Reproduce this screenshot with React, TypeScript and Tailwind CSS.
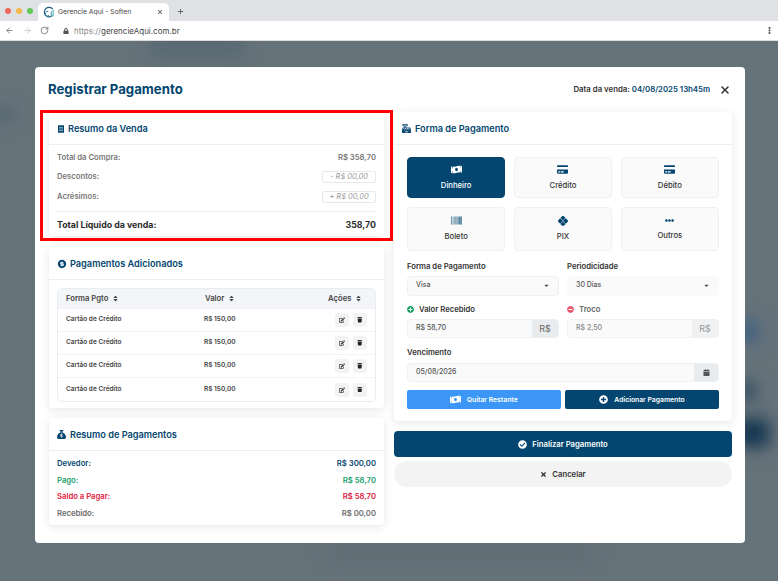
import { FaCalendar, FaCashRegister, FaCheckCircle, FaCreditCard, FaEdit, FaEllipsisH, FaEllipsisV, FaLock, FaMinusCircle, FaMoneyBillWave, FaPlusCircle, FaReceipt, FaSort, FaTimes, FaTrash, FaBarcode, FaCaretDown } from "react-icons/fa"
import { FaPix, FaSackDollar, FaXmark, FaPlus } from "react-icons/fa6"
import { RiMoneyDollarCircleFill } from "react-icons/ri"
import { ArrowLeft, ArrowRight, RotateCw } from "lucide-react"
import type { ReactNode } from "react"

const methods = [
  { label: "Dinheiro", icon: <FaMoneyBillWave className="text-[11px]" />, active: true },
  { label: "Crédito", icon: <FaCreditCard className="text-[11px]" /> },
  { label: "Débito", icon: <FaCreditCard className="text-[11px]" /> },
  { label: "Boleto", icon: <FaBarcode className="text-[11px]" /> },
  { label: "PIX", icon: <FaPix className="text-[10px]" /> },
  { label: "Outros", icon: <FaEllipsisH className="text-[9px]" /> },
]

const summary = [
  { label: "Devedor:", value: "R$ 300,00", color: "text-[#04466f]" },
  { label: "Pago:", value: "R$ 58,70", color: "text-[#16a06a]" },
  { label: "Saldo a Pagar:", value: "R$ 58,70", color: "text-[#e0173d]" },
  { label: "Recebido:", value: "R$ 00,00", color: "text-[#6b6b6b]" },
]

function Card({ className, children }: { className: string; children: ReactNode }) {
  return <div className={`rounded-[4px] bg-white shadow-[0_2px_10px_rgba(0,0,0,0.1)] ${className}`}>{children}</div>
}

function CardTitle({ icon, title, gap }: { icon: ReactNode; title: string; gap: string }) {
  return (
    <div className={`flex h-[33px] items-center border-b border-[#edf0f3] pl-[8px] pt-px text-[9.2px] font-semibold text-[#04466f] ${gap}`}>
      {icon}
      <span>{title}</span>
    </div>
  )
}

function Label({ children, muted }: { children: ReactNode; muted?: boolean }) {
  return <div className={`text-[7.7px] font-semibold ${muted ? "text-[#666]" : "text-[#333]"}`}>{children}</div>
}

function Chrome() {
  return (
    <div className="shrink-0">
      <div className="flex h-[21px] items-end bg-[#dfe1e5]">
        <div className="mb-[7px] ml-[5px] flex gap-[5px]">
          <span className="size-[6px] rounded-full bg-[#f0685f]" />
          <span className="size-[6px] rounded-full bg-[#f6b84b]" />
          <span className="size-[6px] rounded-full bg-[#62c655]" />
        </div>
        <div className="ml-[5px] flex h-[18px] w-[131px] items-center rounded-t-[5px] bg-white pl-[5px] pr-[6px] text-[6.8px] text-[#444]">
          <svg viewBox="0 0 16 16" className="size-[12px] shrink-0" fill="none">
            <path d="M13 4.2A6.3 6.3 0 1 0 12.5 12.6" stroke="#1f5d80" strokeWidth="1.5" />
            <path d="M7 7.5a3 3 0 1 0 1 5" stroke="#2a7d9c" strokeWidth="1.3" />
            <path d="M11 14V7M13.5 14V5" stroke="#39a0a8" strokeWidth="1.3" />
          </svg>
          <span className="ml-[3px] flex-1">Gerencie Aqui - Soften</span>
          <FaTimes className="text-[6px] text-[#777]" />
        </div>
        <FaPlus className="mb-[6px] ml-[8px] text-[7px] text-[#666]" />
      </div>
      <div className="flex h-[20px] items-center border-b border-[#dcdcdc] bg-white pl-[5px] pr-[5px] text-[8px]">
        <ArrowLeft className="size-[9px] text-[#666]" />
        <ArrowRight className="ml-[9px] size-[9px] text-[#bbb]" />
        <RotateCw className="ml-[8px] size-[9px] text-[#666]" />
        <FaLock className="ml-[14px] text-[6px] text-[#555]" />
        <span className="ml-[5px] text-[#888]">
          https://<span className="text-[#444]">gerencieAqui.com.br</span>
        </span>
        <FaEllipsisV className="ml-auto text-[7px] text-[#555]" />
      </div>
    </div>
  )
}

function ResumoVenda() {
  return (
    <Card className="h-[124px]">
      <CardTitle icon={<FaReceipt className="text-[8px]" />} title="Resumo da Venda" gap="gap-[3px]" />
      <div className="px-[8px] text-[7.7px] font-semibold text-[#777]">
        <div className="flex h-[24px] items-center justify-between pt-[1px]">
          <span>Total da Compra:</span>
          <span>R$ 358,70</span>
        </div>
        <div className="mt-px flex h-[14px] items-center justify-between">
          <span>Descontos:</span>
          <span className="flex h-[12px] w-[54px] items-center justify-center rounded-[2px] border border-[#e8e8e8] text-[7.5px] font-normal italic text-[#999]">- R$ 00,00</span>
        </div>
        <div className="mt-[6px] flex h-[14px] items-center justify-between">
          <span>Acrésimos:</span>
          <span className="flex h-[12px] w-[54px] items-center justify-center rounded-[2px] border border-[#e8e8e8] text-[7.5px] font-normal italic text-[#999]">+ R$ 00,00</span>
        </div>
        <div className="mt-[7px] flex h-[26px] items-center justify-between border-t border-[#edf0f3] text-[8.8px] font-bold text-[#2c2c2c]">
          <span>Total Líquido da venda:</span>
          <span>358,70</span>
        </div>
      </div>
    </Card>
  )
}

function Pagamentos() {
  return (
    <Card className="h-[161px]">
      <CardTitle icon={<RiMoneyDollarCircleFill className="text-[10px]" />} title="Pagamentos Adicionados" gap="gap-[3px]" />
      <div className="mx-[8px] mt-[8px] overflow-hidden rounded-[5px] border border-[#e9edf2]">
        <div className="flex h-[20px] items-center bg-[#f3f5f9] pl-[8px] text-[7.7px] font-semibold text-[#444]">
          <span className="flex w-[139px] items-center gap-[4px]">Forma Pgto <FaSort className="text-[7px]" /></span>
          <span className="flex w-[123px] items-center gap-[4px]">Valor <FaSort className="text-[7px]" /></span>
          <span className="flex items-center gap-[4px]">Ações <FaSort className="text-[7px]" /></span>
        </div>
        {[0, 1, 2, 3].map((i) => (
          <div key={i} className={`flex h-[23px] items-center px-[8px] text-[6.5px] font-semibold text-[#444] ${i < 3 ? "border-b border-[#f3f4f6]" : ""}`}>
            <span className="w-[138px]">Cartão de Crédito</span>
            <span>R$ 150,00</span>
            <span className="ml-auto flex gap-[4px]">
              <span className="flex size-[14px] items-center justify-center rounded-[3px] bg-[#f3f3f3]"><FaEdit className="text-[6px] text-[#444]" /></span>
              <span className="flex size-[14px] items-center justify-center rounded-[3px] bg-[#f3f3f3]"><FaTrash className="text-[5.5px] text-[#222]" /></span>
            </span>
          </div>
        ))}
      </div>
    </Card>
  )
}

function ResumoPagamentos() {
  return (
    <Card className="h-[107px]">
      <CardTitle icon={<FaSackDollar className="text-[9px]" />} title="Resumo de Pagamentos" gap="gap-[4px]" />
      <div className="flex flex-col gap-[6px] px-[8px] pt-[8px] text-[7.7px] font-semibold">
        {summary.map((row) => (
          <div key={row.label} className={`flex h-[10.5px] items-center justify-between ${row.color}`}>
            <span>{row.label}</span>
            <span>{row.value}</span>
          </div>
        ))}
      </div>
    </Card>
  )
}

function FormaPagamento() {
  return (
    <Card className="h-[309px]">
      <CardTitle icon={<FaCashRegister className="text-[9px]" />} title="Forma de Pagamento" gap="gap-[4px]" />
      <div className="px-[13px] pt-[12px]">
        <div className="grid grid-cols-3 grid-rows-[41px_43.5px] gap-x-[8.5px] gap-y-[9px]">
          {methods.map((m) => (
            <div
              key={m.label}
              className={`flex flex-col items-center justify-center gap-[5px] rounded-[4px] border pt-px text-[7.7px] font-medium ${
                m.active ? "border-[#04466f] bg-[#04466f] text-white" : "border-[#f0f0f0] bg-[#fafafa] text-[#333]"
              }`}
            >
              <span className={m.active ? "text-white" : "text-[#04466f]"}>{m.icon}</span>
              <span>{m.label}</span>
            </div>
          ))}
        </div>
        <div className="mt-[10px] grid grid-cols-[152px_152px] gap-x-[8px]">
          <div>
            <Label>Forma de Pagamento</Label>
            <div className="mt-[3.5px] flex h-[20px] items-center justify-between rounded-[4px] border border-[#f0f0f0] bg-[#fafafa] px-[8px] text-[7px] font-medium text-[#555]">
              Visa <FaCaretDown className="text-[7px] text-[#444]" />
            </div>
          </div>
          <div>
            <Label>Periodicidade</Label>
            <div className="mt-[3.5px] flex h-[20px] items-center justify-between rounded-[4px] bg-[#fafafa] px-[9px] text-[7px] font-medium text-[#555]">
              30 Dias <FaCaretDown className="text-[7px] text-[#444]" />
            </div>
          </div>
          <div className="mt-[8px]">
            <Label><span className="flex items-center gap-[5px]"><FaPlusCircle className="text-[7px] text-[#12a162]" />Valor Recebido</span></Label>
            <div className="mt-[4px] flex h-[19px] items-center overflow-hidden rounded-[4px] border border-[#f0f0f0] bg-[#fafafa] pl-[8px] text-[7px] font-medium text-[#555]">
              <span className="flex-1">R$ 58,70</span>
              <span className="flex h-full w-[26px] items-center justify-center bg-[#e9ecef] text-[9px] font-normal text-[#666]">R$</span>
            </div>
          </div>
          <div className="mt-[8px]">
            <Label muted><span className="flex items-center gap-[5px]"><FaMinusCircle className="text-[7px] text-[#e8596e]" />Troco</span></Label>
            <div className="mt-[4px] flex h-[19px] items-center overflow-hidden rounded-[4px] border border-[#f0f0f0] bg-[#fafafa] pl-[8px] text-[7px] font-medium text-[#888]">
              <span className="flex-1">R$ 2,50</span>
              <span className="flex h-full w-[26px] items-center justify-center bg-[#eff1f3] text-[9px] font-normal text-[#999]">R$</span>
            </div>
          </div>
        </div>
        <div className="mt-[9px]">
          <Label>Vencimento</Label>
          <div className="mt-[4px] flex h-[19px] items-center overflow-hidden rounded-[4px] border border-[#f0f0f0] bg-[#fafafa] pl-[8px] text-[7px] font-medium text-[#555]">
            <span className="flex-1">05/08/2026</span>
            <span className="flex h-full w-[24px] items-center justify-center bg-[#e9ecef]"><FaCalendar className="text-[7px] text-[#555]" /></span>
          </div>
        </div>
        <div className="mt-[8.5px] grid grid-cols-[153.5px_154px] gap-[4.5px]">
          <div className="flex h-[19px] items-center justify-center gap-[6px] rounded-[2px] bg-[#3b96f5] text-[6.8px] font-semibold text-white">
            <FaMoneyBillWave className="text-[11px]" /> Quitar Restante
          </div>
          <div className="flex h-[19px] items-center justify-center gap-[6px] rounded-[2px] bg-[#04466f] text-[6.8px] font-semibold text-white">
            <FaPlusCircle className="text-[9px]" /> Adicionar Pagamento
          </div>
        </div>
      </div>
    </Card>
  )
}

export default function App() {
  return (
    <div className="flex h-[581px] w-[778px] flex-col overflow-hidden font-['Inter',sans-serif]">
      <Chrome />
      <div className="relative flex-1 overflow-hidden bg-[#66727a] pl-[35px] pt-[26px]">
        {/* blurred page behind the modal */}
        <div className="absolute left-[150px] top-[-10px] h-[28px] w-[95px] bg-[#5a6a73] blur-[8px]" />
        <div className="absolute left-[-8px] top-[65px] h-[18px] w-[22px] bg-[#5a6972] blur-[6px]" />
        <div className="absolute left-[330px] top-[505px] h-[16px] w-[260px] bg-[#5f6c74] blur-[8px]" />
        <div className="absolute left-[735px] top-[278px] h-[24px] w-[24px] bg-[#47657f] blur-[7px]" />
        <div className="absolute left-[735px] top-[340px] h-[20px] w-[22px] bg-[#3e5665] blur-[7px]" />
        <div className="absolute left-[735px] top-[378px] h-[28px] w-[34px] bg-[#143650] blur-[8px]" />
        <div className="relative h-[476px] w-[710px] rounded-[4px] bg-white">
          <div className="flex h-[45px] items-center justify-between pl-[13px] pr-[14px]">
            <h1 className="text-[13.2px] font-bold text-[#04466f]">Registrar Pagamento</h1>
            <div className="flex items-center gap-[9px]">
              <span className="text-[7.8px] font-semibold text-[#333]">
                Data da venda: <span className="text-[#04466f]">04/08/2025 13h45m</span>
              </span>
              <FaXmark className="text-[12px] text-[#333]" />
            </div>
          </div>
          <div className="flex gap-[10px] pl-[14px]">
            <div className="flex w-[335px] flex-col gap-[10px]">
              <div className="relative mb-px">
                <ResumoVenda />
                <div className="pointer-events-none absolute -inset-x-[9px] -bottom-[5px] -top-[2px] border-[3px] border-[#ff0000]" />
              </div>
              <Pagamentos />
              <ResumoPagamentos />
            </div>
            <div className="flex w-[338px] flex-col">
              <FormaPagamento />
              <div className="mt-[10px] flex h-[26px] items-center justify-center gap-[5px] rounded-[4px] bg-[#04466f] pt-px text-[7.7px] font-semibold text-white">
                <FaCheckCircle className="text-[9px]" /> Finalizar Pagamento
              </div>
              <div className="mt-[4px] flex h-[26px] items-center justify-center gap-[5px] rounded-full bg-[#f3f3f3] pt-px text-[7.7px] font-semibold text-[#333]">
                <FaTimes className="text-[7px]" /> Cancelar
              </div>
            </div>
          </div>
        </div>
      </div>
    </div>
  )
}
